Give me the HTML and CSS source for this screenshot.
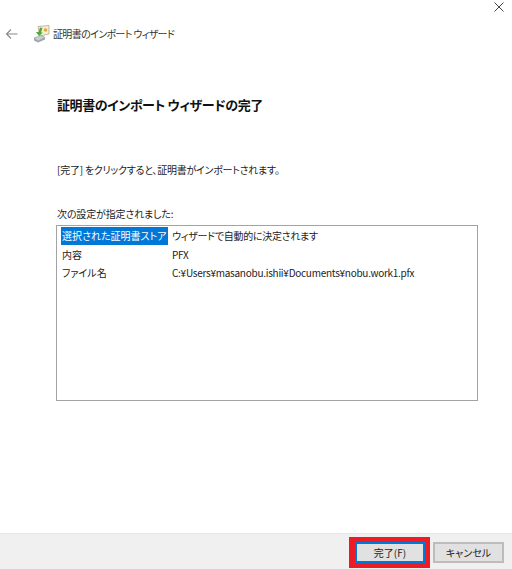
FILE: index.html
```html
<!DOCTYPE html>
<html lang="ja">
<head>
<meta charset="utf-8">
<title>証明書のインポート ウィザード</title>
<link rel="stylesheet" href="styles.css">
</head>
<body>
<div class="window">
  <div class="close-row">
    <svg class="close" width="10" height="10" viewBox="0 0 10 10"><path d="M0.5 0.5L9.5 9.5M9.5 0.5L0.5 9.5" stroke="#444" stroke-width="1" fill="none"/></svg>
  </div>
  <div class="nav">
    <svg class="back" width="14" height="12" viewBox="0 0 14 12"><path d="M12.5 6H1.5M6 1.5L1.5 6L6 10.5" stroke="#888" stroke-width="1.1" fill="none"/></svg>
    <svg class="wizicon" width="17" height="18" viewBox="0 0 17 18">
      <path d="M5 1.5L16 0.5V9L7 11Z" fill="#f4efdc" stroke="#b9a87c" stroke-width="0.8"/>
      <circle cx="12.5" cy="5" r="1.8" fill="#e8a33a"/>
      <path d="M1 13L8 10.5L12 12.5L5 16Z" fill="#c9d0d2" stroke="#8b9698" stroke-width="0.6"/>
      <path d="M1 13V15.5L5 17.5L12 14.5V12.5L5 16Z" fill="#9aa5a8"/>
      <path d="M7 2.5L5.5 7H3L6 11L10 7.5H8L9.5 3Z" fill="#4fa838"/>
    </svg>
    <span class="nav-title">証明書のインポート ウィザード</span>
  </div>
  <main class="content">
    <h1 class="heading">証明書のインポート ウィザードの完了</h1>
    <p class="intro">[完了] をクリックすると、証明書がインポートされます。</p>
    <p class="label">次の設定が指定されました:</p>
    <div class="listbox">
      <div class="row"><span class="key selected">選択された証明書ストア</span><span class="val">ウィザードで自動的に決定されます</span></div>
      <div class="row"><span class="key">内容</span><span class="val">PFX</span></div>
      <div class="row"><span class="key">ファイル名</span><span class="val">C:¥Users¥masanobu.ishii¥Documents¥nobu.work1.pfx</span></div>
    </div>
  </main>
  <footer class="footer">
    <div class="highlight"><button class="btn primary">完了(F)</button></div>
    <button class="btn cancel">キャンセル</button>
  </footer>
</div>
</body>
</html>
```
FILE: styles.css
```css
* { box-sizing: border-box; }
html, body { margin: 0; padding: 0; }
body {
  width: 512px;
  height: 569px;
  background: #fff;
  font-family: "Noto Sans CJK JP", "Liberation Sans", sans-serif;
  font-feature-settings: "palt";
  font-size: 10px;
  color: #222;
  overflow: hidden;
}
.window { display: flex; flex-direction: column; height: 569px; }
.close-row { display: flex; justify-content: flex-end; height: 24px; padding: 2px 8px 0 0; }
.close { display: block; }
.nav { display: flex; align-items: center; height: 20px; padding-left: 5px; }
.back { margin-right: 14px; }
.wizicon { margin-right: 3px; }
.nav-title { font-size: 10px; line-height: 20px; color: #333; letter-spacing: -0.65px; }
.content { flex: 1; padding: 0 34px 0 57px; display: flex; flex-direction: column; }
.heading { margin: 49px 0 0; font-size: 13px; line-height: 24px; font-weight: 700; color: #111; letter-spacing: -0.4px; }
.intro { margin: 46px 0 0; line-height: 14px; font-size: 10px; letter-spacing: -0.25px; }
.label { margin: 30px 0 0; line-height: 14px; font-size: 10px; letter-spacing: -0.15px; }
.listbox {
  margin: 4px 0 0 -1px;
  width: 422px;
  height: 176px;
  border: 1px solid #a3a3a3;
  padding: 1px 4px;
  display: flex;
  flex-direction: column;
}
.row { display: flex; height: 18.5px; line-height: 18px; white-space: nowrap; }
.key { width: 107px; padding-left: 1px; }
.selected { background: #0078d7; color: #fff; height: 18px; }
.val { padding-left: 4px; letter-spacing: -0.27px; }
.footer {
  height: 36px;
  background: #f0f0f0;
  border-top: 1px solid #e6e6e6;
  display: flex;
  align-items: flex-start;
  justify-content: flex-end;
  padding: 3px 8px 0 0;
  gap: 3px;
}
.highlight { background: #ed1c24; padding: 5px 5px 5px 6px; display: flex; }
.btn {
  width: 70px;
  height: 21px;
  padding: 0;
  background: #e1e1e1;
  border: 1px solid #adadad;
  font: inherit;
  font-feature-settings: "palt";
  font-size: 10px;
  line-height: 17px;
  color: #222;
}
.primary { border: 2px solid #0078d7; }
.cancel { width: 71px; margin-top: 5px; border-width: 2px; border-color: #bcbcbc; }
```
